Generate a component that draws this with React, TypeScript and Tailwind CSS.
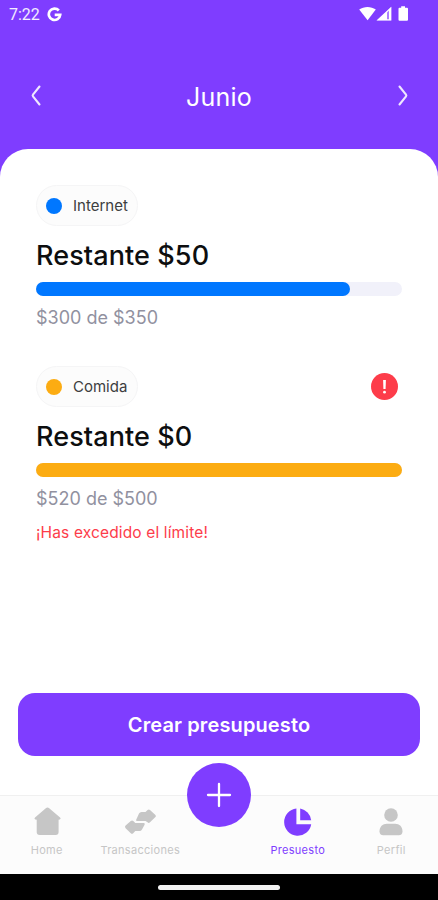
import type { ReactNode } from 'react'

type Budget = {
  name: string
  color: string
  remaining: string
  summary: string
  progress: number
  exceeded?: boolean
}

const BUDGETS: Budget[] = [
  { name: 'Internet', color: '#0077FF', remaining: '$50', summary: '$300 de $350', progress: 85.7 },
  { name: 'Comida', color: '#FCAC12', remaining: '$0', summary: '$520 de $500', progress: 100, exceeded: true }
]

export default function App() {
  return (
    <div className="flex h-[900px] w-[438px] flex-col overflow-hidden bg-[#7F3DFF] font-['Inter',sans-serif]">
      <StatusBar />
      <header className="flex h-[121px] shrink-0 items-center justify-between px-[29px] pt-[14px] text-white">
        <Chevron d="M10.5 1.5 4.2 9.3a1.8 1.8 0 0 0 0 2.4l6.3 7.8" />
        <h1 className="pt-[2px] text-[25px] leading-[30px] tracking-[0.2px]">Junio</h1>
        <Chevron d="M4.5 1.5l6.3 7.8a1.8 1.8 0 0 1 0 2.4l-6.3 7.8" />
      </header>

      <main className="flex flex-1 flex-col rounded-t-[28px] bg-white pt-[36px]">
        <div className="flex flex-1 flex-col px-[36px]">
          {BUDGETS.map((b) => (
            <BudgetRow key={b.name} budget={b} />
          ))}
        </div>
        <button className="mx-[18px] mb-[39px] h-[63px] rounded-[17px] bg-[#7F3DFF] pt-px text-[20px] font-semibold tracking-[0.12px] text-white">
          Crear presupuesto
        </button>
      </main>

      <TabBar />
      <div className="flex h-[26px] shrink-0 justify-center bg-black pt-[11px]">
        <div className="h-[5px] w-[122px] rounded-full bg-[#f2f2f2]" />
      </div>
    </div>
  )
}

function StatusBar() {
  return (
    <div className="flex h-[28px] shrink-0 items-center px-[9px] text-white">
      <span className="pt-px font-['Roboto',sans-serif] text-[16px] leading-[28px] text-white/90">7:22</span>
      <svg className="ml-[7px]" width="15" height="15" viewBox="0 0 15 15" fill="none">
        <path d="M11.8 3.5A5.7 5.7 0 1 0 13.2 7.8H7.7" stroke="currentColor" strokeWidth="2.7" />
      </svg>
      <svg className="ml-auto mr-[18px]" width="52" height="16" viewBox="0 0 52 16" fill="currentColor">
        <path d="M.2 3.6C5 .1 12 .1 16.8 3.6L8.6 14.3z" />
        <path d="M32.3.8v13.7H17.5z" opacity=".35" />
        <path d="M32.3.8v13.7H17.5zM28 6.5v6.8h2V4.6z" fillRule="evenodd" />
        <path d="M42.2.2h3.8v1.600h2q1 0 1 1v11q0 1-1 1h-7.500q-1 0-1-1v-11q0-1 1-1h1.700z" />
      </svg>
    </div>
  )
}

function Chevron({ d }: { d: string }) {
  return (
    <svg width="14" height="21" viewBox="0 0 14 21" fill="none">
      <path d={d} stroke="currentColor" strokeOpacity=".88" strokeWidth="2.1" strokeLinecap="round" strokeLinejoin="round" />
    </svg>
  )
}

function BudgetRow({ budget }: { budget: Budget }) {
  return (
    <section className="h-[181px]">
      <div className="flex h-[41px] items-center justify-between pr-[4px]">
        <div className="flex h-[41px] w-[102px] items-center rounded-full border border-[#f5f5f6] bg-[#fcfcfc] pl-[9px]">
          <span className="size-[16px] rounded-full" style={{ background: budget.color }} />
          <span className="ml-[11px] pt-[2px] text-[15px] text-[#3d3e40]">{budget.name}</span>
        </div>
        {budget.exceeded && (
          <svg width="27" height="27" viewBox="0 0 27 27">
            <circle cx="13.5" cy="13.5" r="13.5" fill="#FD3C4A" />
            <path d="M12.1 7h2.8l-.3 9h-2.2z" fill="#fff" />
            <circle cx="13.5" cy="19.2" r="1.4" fill="#fff" />
          </svg>
        )}
      </div>
      <h2 className="mt-[14px] text-[27px] leading-[32px] font-medium tracking-[0.1px] text-[#0D0E0F]">
        Restante {budget.remaining}
      </h2>
      <div className="mt-[10px] h-[14px] rounded-full bg-[#F1F1FA]">
        <div className="h-full rounded-full" style={{ width: `${budget.progress}%`, background: budget.color }} />
      </div>
      <p className="mt-[11px] text-[18px] leading-[22px] text-[#91919F]">{budget.summary}</p>
      {budget.exceeded && (
        <p className="mt-[13px] text-[15.5px] leading-[20px] tracking-[0.14px] text-[#FD3C4A]">¡Has excedido el límite!</p>
      )}
    </section>
  )
}

function TabBar() {
  return (
    <nav className="relative flex h-[79px] shrink-0 justify-between border-t border-[#f0f0f0] bg-[#fcfcfc]">
      <Tab label="Home">
        <path d="M14.8 2.3q1.7-1.4 3.4 0l10.900 9.100q1.300 1.300-.3 2.100l-1.200.3V26q0 3-3 3H8.700q-3 0-3-3V13.800l-1.400-.3q-1.600-.8-.3-2.100z" />
      </Tab>
      <Tab label="Transacciones">
        <path d="M12.2 13.8 15 7.600Q15.800 6 17.600 6H21.500L23.600 4q1.200-1.100 2.400 0l5.200 4.700q1.300 1.300 0 2.600L26 16.300q-1.300 1.200-2.500 0L21.500 15H13q-1.300 0-.8-1.200z" />
        <path d="M20.600 18.800 18 23.500Q17.200 25 15.400 25H11.300L9.200 27.200q-1.200 1.100-2.400 0L1.600 22.200q-1.300-1.300 0-2.600L6.800 15q1.300-1.200 2.500 0L11.300 17h8.500q1.500.3.800 1.800z" />
      </Tab>
      <div className="w-[64px] shrink-0" />
      <Tab label="Presuesto" active>
        <path d="M14.4 2.6V18.2H29.200A13.600 13.600 0 1 1 14.400 2.600z" />
        <path d="M18.2 2.6A13.6 13.6 0 0 1 29.2 14.2H18.200z" />
      </Tab>
      <Tab label="Perfil">
        <circle cx="16" cy="9" r="6.8" />
        <path d="M12 17.8h8c4.500 0 7.500 3 7.500 7.500 0 2.600-1.300 4-3.800 4H8.300c-2.500 0-3.800-1.400-3.800-4 0-4.500 3-7.500 7.500-7.500z" />
      </Tab>
      <button
        aria-label="Agregar"
        className="absolute -top-[33px] left-[187px] flex size-[64px] items-center justify-center rounded-full bg-[#7F3DFF] text-white"
      >
        <svg width="26" height="26" viewBox="0 0 26 26" fill="none">
          <path d="M13 2v22M2 13h22" stroke="currentColor" strokeWidth="2.3" strokeLinecap="round" />
        </svg>
      </button>
    </nav>
  )
}

function Tab({ label, active, children }: { label: string; active?: boolean; children: ReactNode }) {
  return (
    <div className={`flex w-[93.5px] flex-col items-center pt-[10px] ${active ? 'text-[#7F3DFF]' : 'text-[#C6C6C6]'}`}>
      <svg width="32" height="32" viewBox="0 0 32 32" fill="currentColor">
        {children}
      </svg>
      <span className="mt-[5px] text-[11px] leading-[14px] tracking-[0.3px]">{label}</span>
    </div>
  )
}
